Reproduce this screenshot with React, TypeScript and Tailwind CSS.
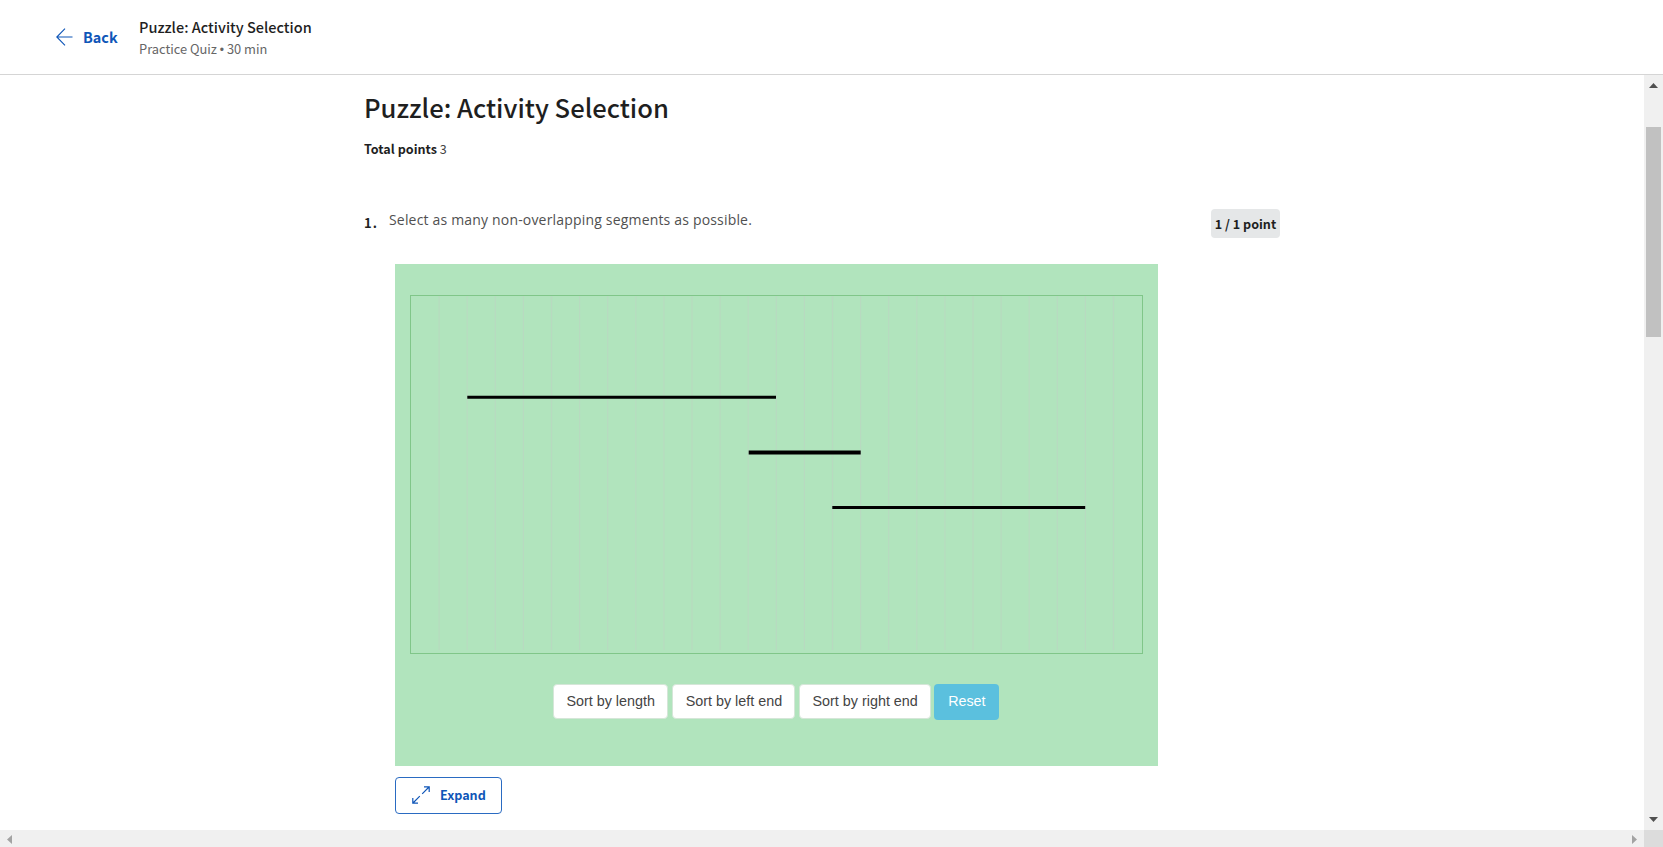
import React from "react";

const CELL = 28.1;
const gridLines = Array.from({ length: 25 }, (_, i) => (i + 1) * CELL);

const segments = [
  { x1: 56.3, x2: 365, y: 101.3, w: 3 },
  { x1: 337.7, x2: 449.7, y: 156.4, w: 4 },
  { x1: 421.3, x2: 674.2, y: 211.6, w: 3 },
];

function SegmentBoard() {
  return (
    <svg width="731" height="357" viewBox="0 0 731 357" className="block">
      {gridLines.map((x) => (
        <line key={x} x1={x} x2={x} y1="0" y2="354" stroke="#c8c8c8" strokeOpacity="0.32" strokeWidth="1.2" />
      ))}
      {segments.map((s) => (
        <line key={s.y} x1={s.x1} x2={s.x2} y1={s.y} y2={s.y} stroke="#000" strokeWidth={s.w} />
      ))}
    </svg>
  );
}

function Header() {
  return (
    <header className="flex h-[75px] shrink-0 items-start border-b-[1.5px] border-[#d5d5d5] pl-[56px]">
      <button className="mt-[26px] flex h-[22px] items-center text-[#0f56b8]">
        <svg width="17" height="18" viewBox="0 0 17 18" fill="none" stroke="currentColor" strokeWidth="1.1">
          <path d="M16.5 9H.8M9 .7.8 9 9 17.3" />
        </svg>
        <span className="ml-[10px] w-[56px] text-left text-[14.4px] leading-[22px] font-bold">Back</span>
      </button>
      <div className="mt-[16px] flex flex-col">
        <span className="text-[14.5px] leading-[21px] font-medium text-[#1f1f1f]">Puzzle: Activity Selection</span>
        <span className="text-[12.85px] leading-[24px] text-[#666]">
          Practice Quiz <span className="font-['Liberation_Sans',sans-serif] text-[12px] leading-none">•</span> 30 min
        </span>
      </div>
    </header>
  );
}

function PlainButton({ label, className }: { label: string; className: string }) {
  return (
    <button className={`h-[35px] rounded-[4px] border border-[#d5e6d8] bg-white text-[14.35px] text-[#444] ${className}`}>
      {label}
    </button>
  );
}

function Puzzle() {
  return (
    <section className="h-[502px] w-[763px] bg-[#b1e4bd] px-[15px] pt-[31px]">
      <div className="h-[359px] w-[733px] border border-[#80c689]">
        <SegmentBoard />
      </div>
      <div className="mt-[29px] flex items-center gap-[4px] pl-[143px] font-['Liberation_Sans',sans-serif]">
        <PlainButton label="Sort by length" className="w-[115.3px]" />
        <PlainButton label="Sort by left end" className="w-[123.2px]" />
        <PlainButton label="Sort by right end" className="w-[131.4px]" />
        <button className="-ml-[0.5px] mt-px h-[36px] w-[65px] rounded-[4px] bg-[#5bc0de] text-[14.3px] text-white">Reset</button>
      </div>
    </section>
  );
}

function Quiz() {
  return (
    <main className="min-w-0 flex-1 overflow-hidden pl-[364px]">
      <h1 className="mt-[12px] text-[25.6px] leading-[40px] font-medium text-[#1f1f1f]">Puzzle: Activity Selection</h1>
      <p className="mt-[12px] text-[12.6px] leading-[20px] text-[#444]">
        <span className="font-bold text-[#1f1f1f]">Total points</span> 3
      </p>
      <div className="mt-[49px] flex h-[56px] items-start">
        <span className="mt-[5px] w-[25px] text-[13px] leading-[20px] font-bold tracking-[1px] text-[#1f1f1f]">1.</span>
        <p className="w-[822px] font-['Open_Sans',sans-serif] text-[14px] leading-[24px] tracking-[0.18px] text-[#505050]">
          Select as many non-overlapping segments as possible.
        </p>
        <span className="mt-[1px] flex h-[29px] w-[69px] items-center justify-center rounded-[4px] bg-[#e5e7e8] pt-px text-[12.6px] font-bold text-[#1f1f1f]">
          1 / 1 point
        </span>
      </div>
      <div className="pl-[31px]">
        <Puzzle />
        <button className="mt-[11px] flex h-[37px] w-[107px] items-center rounded-[4px] border border-[#2a6bc2] pl-[16px] text-[#0f56b8]">
          <svg width="18" height="18" viewBox="0 0 18 18" fill="none" stroke="currentColor" strokeWidth="1.2" className="-mt-px">
            <path d="M10.2 7.8 17 1M12 .8H17.2V6M7.8 10.2 1 17M.8 12V17.2H6" />
          </svg>
          <span className="-mt-px ml-[10px] text-[12.6px] font-bold">Expand</span>
        </button>
      </div>
    </main>
  );
}

function VerticalScrollbar() {
  return (
    <div className="flex w-[19px] shrink-0 flex-col items-center bg-[#f0f0f0]">
      <svg width="9" height="5" viewBox="0 0 9 5" className="mt-[8px]">
        <path d="M0 5 4.5 0 9 5Z" fill="#505050" />
      </svg>
      <div className="mt-[39px] h-[210px] w-[15px] bg-[#c1c1c1]" />
      <svg width="9" height="5" viewBox="0 0 9 5" className="mt-auto mb-[8px]">
        <path d="M0 0 4.5 5 9 0Z" fill="#505050" />
      </svg>
    </div>
  );
}

function HorizontalScrollbar() {
  return (
    <div className="flex h-[17px] shrink-0 bg-[#f0f0f0]">
      <div className="flex flex-1 items-center justify-between pt-px pr-[7px] pl-[7px]">
        <svg width="5" height="9" viewBox="0 0 5 9">
          <path d="M5 0 0 4.5 5 9Z" fill="#a3a3a3" />
        </svg>
        <svg width="5" height="9" viewBox="0 0 5 9">
          <path d="M0 0 5 4.5 0 9Z" fill="#a3a3a3" />
        </svg>
      </div>
      <div className="w-[19px] bg-[#dcdcdc]" />
    </div>
  );
}

export default function App() {
  return (
    <div className="flex h-[847px] w-[1663px] flex-col overflow-hidden bg-white font-['Noto_Sans_CJK_SC',sans-serif]">
      <Header />
      <div className="flex min-h-0 flex-1">
        <Quiz />
        <VerticalScrollbar />
      </div>
      <HorizontalScrollbar />
    </div>
  );
}
